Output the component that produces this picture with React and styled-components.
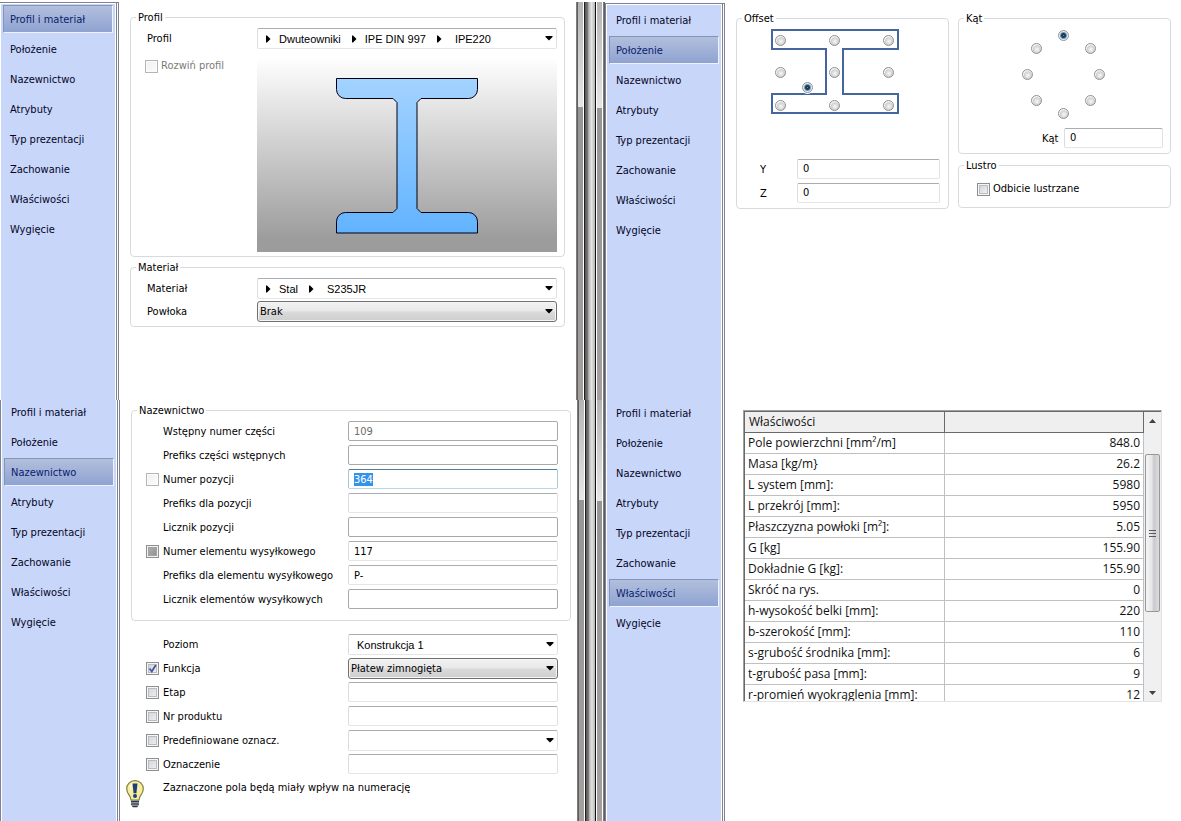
import React, { useEffect, useRef } from 'react';
import styled, { createGlobalStyle, css } from 'styled-components';

const GlobalStyle = createGlobalStyle`
    * {
        box-sizing: border-box;
    }

    body {
        margin: 0;
        background-color: #ffffff;
        color: #000000;
        font-family: "DejaVu Sans Condensed", "Noto Sans", sans-serif;
        font-size: 11px;
        line-height: 16px;
    }

    button, input, select {
        font: inherit;
        color: inherit;
        margin: 0;
    }
`;

const Page = styled.main`
    display: grid;
    grid-template-rows: minmax(400px, auto) 1fr;
    min-height: 100vh;
    overflow: hidden;
`;

const Strip = styled.div`
    display: flex;
    min-width: 0;
`;

const Panel = styled.section`
    display: flex;
    flex: 1 1 0;
    min-width: 0;
`;

/* sidebar */

const Sidebar = styled.nav`
    flex: none;
    margin-top: ${props => props.$top}px;
    padding: 0 1px;
    border-right: 3px double #7d8190;
    border-left: ${props => (props.$openLeft ? 'none' : '1px solid #7d8190')};
    border-top: ${props => (props.$top ? '1px solid #7d8190' : 'none')};
    padding-top: ${props => (props.$top ? '1px' : '0')};
`;

const MenuList = styled.ul`
    display: flow-root;
    width: 114px;
    height: 100%;
    margin: 0;
    padding: ${props => (props.$cut ? '0' : '1px')} 2px 0;
    list-style: none;
    background-color: #c8d6fa;
`;

const MenuItem = styled.li`
    height: 30px;

    &:first-child {
        margin-top: ${props => props.$shift}px;
    }
`;

const MenuButton = styled.button`
    display: block;
    width: 100%;
    height: 28px;
    padding: 2px 6px 0;
    border: 1px solid transparent;
    background: transparent;
    color: #05051e;
    text-align: left;
    white-space: nowrap;
    cursor: pointer;

    ${props => props.$active && css`
        color: #0a1c6e;
        background: linear-gradient(#b2bfdc, #8fa3d2);
        border-color: #8593b8 #eef2fd #eef2fd #8593b8;
    `}
`;

/* splitter between the panels */

const Divider = styled.div`
    display: flex;
    flex: none;
    width: 29px;
    margin-top: ${props => (props.$cut ? 0 : 2)}px;
    padding-left: ${props => (props.$cut ? 1 : 0)}px;
`;

const Edge = styled.span`
    width: 2px;
    background: linear-gradient(90deg, #8a8a8a, #505050);
`;

const Rail = styled.span`
    width: 5px;
    margin-right: 1px;
    background: linear-gradient(#b4b4b4, #e6e6e6 ${props => props.$turn}px, #969696 ${props => props.$turn}px, #a3a09e);
`;

const Tube = styled.span`
    flex: 1;
    margin-right: 1px;
    border-left: 1px solid #1e1e1e;
    border-right: 1px solid #101010;
    background: linear-gradient(90deg, #555555, #7d7d7d 30%, #b0b0b0 36%, #e4e4e4 65%, #b4b4b4);
`;

/* content */

const Content = styled.div`
    flex: 1;
    min-width: 0;
    padding: ${props => props.$pad};
`;

const Group = styled.fieldset`
    min-width: 0;
    margin: 0;
    margin-top: ${props => props.$top || 0}px;
    margin-left: ${props => props.$indent || 0}px;
    padding: ${props => props.$pad};
    border: 1px solid #d8dbde;
    border-radius: 4px;
`;

const Legend = styled.legend`
    height: 14px;
    margin-left: ${props => props.$left}px;
    padding: 0 2px;
`;

const FormGrid = styled.div`
    display: grid;
    grid-template-columns: 112px minmax(0, 1fr);
    row-gap: ${props => props.$gap || 0}px;
`;

const Caption = styled.label`
    height: 20px;
    padding-left: 2px;
    line-height: 22px;
    white-space: nowrap;
`;

const fieldBorder = css`
    border: 1px solid;
    border-color: #abadb3 #dfe1e5 #e3e5e8 #dadce0;
    border-radius: 2px;
`;

const TextInput = styled.input`
    display: block;
    width: 100%;
    min-width: 0;
    height: 20px;
    padding: 0 5px;
    background-color: #ffffff;
    ${fieldBorder}

    ${props => props.$locked && css`
        border-color: #a9a9a9;
    `}

    &:disabled {
        color: #6d6d6d;
    }

    &:focus {
        outline: none;
        border-color: #4f7d93 #a9cbd6 #b7d9e4 #a5c8d4;
    }

    &::selection {
        color: #ffffff;
        background-color: #3492ea;
    }
`;

const PathButton = styled.button`
    display: flex;
    align-items: center;
    width: 100%;
    height: 21px;
    padding: 0 3px 0 8px;
    background-color: #ffffff;
    font-family: "Liberation Sans", Arial, sans-serif;
    white-space: nowrap;
    ${fieldBorder}
`;

const PathStep = styled.span`
    margin: 0 11px 0 ${props => (props.$last ? 13 : 8)}px;
`;

const PathEnd = styled.span`
    display: flex;
    margin-left: auto;
`;

const SelectBox = styled.span`
    display: grid;
    align-items: center;

    & > select, & > svg {
        grid-area: 1 / 1;
    }

    & > svg {
        justify-self: end;
        margin-right: 4px;
        pointer-events: none;
    }
`;

const Select = styled.select`
    appearance: none;
    width: 100%;
    height: 21px;
    padding: 0 20px 0 8px;
    background: #ffffff;
    font-family: "Liberation Sans", Arial, sans-serif;
    ${fieldBorder}

    ${props => props.$raised && css`
        padding-top: 1px;
        padding-left: 2px;
        border-color: #707070;
        border-radius: 3px;
        background: linear-gradient(#f2f2f2, #e8e8e8 48%, #dadada 52%, #cecece);
        box-shadow: inset 0 0 0 1px #f6f6f6;
        font-family: inherit;
    `}
`;

const CheckBox = styled.span`
    display: inline-grid;
    flex: none;
    width: 13px;
    height: 13px;

    & > input, & > svg {
        grid-area: 1 / 1;
    }

    & > svg {
        display: none;
        pointer-events: none;
    }

    & > input:checked + svg {
        display: block;
    }
`;

const CheckInput = styled.input`
    appearance: none;
    width: 13px;
    height: 13px;
    border: 1px solid #8e8f8f;
    background: linear-gradient(135deg, #cbcfd5, #f6f6f6);
    box-shadow: inset 0 0 0 1px #f6f6f6, inset 0 0 0 2px #b9bcc1;

    ${props => props.$faint && css`
        border-color: #b5b5b5;
        background: linear-gradient(135deg, #f0f0f0, #fbfbfb);
        box-shadow: inset 0 0 0 1px #fbfbfb;
    `}

    &:indeterminate {
        background: linear-gradient(135deg, #b4b4b4, #8c8c8c);
        box-shadow: inset 0 0 0 1px #f2f2f2, inset 0 0 0 2px #a2a2a2;
    }
`;

const CheckLabel = styled.label`
    display: flex;
    align-items: center;
    gap: 3px;
    height: 14px;
    white-space: nowrap;
    color: ${props => (props.$muted ? '#7a7a7a' : 'inherit')};
`;

const PreviewSide = styled.div`
    padding-top: 10px;
`;

const Preview = styled.div`
    display: flex;
    justify-content: center;
    align-items: center;
    height: 203px;
    padding-top: 10px;
    background: linear-gradient(#ffffff 4%, #9c9c9c 94%);
`;

const NamingRow = styled.div`
    display: grid;
    grid-template-columns: 15px 187px minmax(0, 1fr);
    align-items: start;
    height: 24px;

    ${CheckBox} {
        margin-top: 4px;
    }
`;

const OtherRows = styled.div`
    margin-top: 13px;
    padding: 0 13px 0 20px;
`;

const Note = styled.div`
    display: flex;
    gap: 19px;
    margin-top: 2px;
    white-space: nowrap;
`;

/* position page */

const PositionGrid = styled.div`
    display: grid;
    grid-template-columns: minmax(0, 1fr) minmax(0, 1fr);
    column-gap: 9px;
    align-items: start;
`;

const Board = styled.div`
    position: relative;
    width: ${props => props.$w}px;
    height: ${props => props.$h}px;
    margin: ${props => props.$margin};
`;

const Radio = styled.input`
    appearance: none;
    position: absolute;
    left: ${props => props.$x}px;
    top: ${props => props.$y}px;
    width: 11px;
    height: 11px;
    border: 1px solid #909090;
    border-radius: 50%;
    background: radial-gradient(circle at 55% 60%, #f2f2f2 10%, #cfcfcf 50%, #f4f4f4 62%);

    &:checked {
        border-color: #8c969e;
        background: radial-gradient(circle at 50% 50%, #5b93b5 0, #123e60 1px, #123e60 2px, #e4ecf2 4px);
        box-shadow: 0 0 0 1px #ffffff;
    }
`;

const ValueRow = styled.div`
    display: grid;
    grid-template-columns: ${props => props.$label}px minmax(0, 1fr);
    height: 20px;
    padding-left: ${props => props.$left}px;
    line-height: 22px;

    & + & {
        margin-top: 4px;
    }
`;

/* properties table */

const TableFrame = styled.div`
    display: flex;
    height: 292px;
    overflow: hidden;
    border: 1px solid;
    border-color: #a0a0a0 #e3e3e3 #e3e3e3 #a0a0a0;
    box-shadow: inset 1px 1px 0 #696969;
    padding: 1px 0 0 1px;
`;

const Table = styled.table`
    flex: 1;
    align-self: flex-start;
    width: 100%;
    border-collapse: separate;
    border-spacing: 0;
    table-layout: fixed;
    font-family: "Open Sans", "Noto Sans", sans-serif;
    font-size: 12px;
    line-height: 20px;
    color: #111111;
`;

const HeadCell = styled.th`
    width: 50%;
    height: 21px;
    padding: 0 4px;
    background-color: #efefef;
    border-right: 1px solid #696969;
    border-bottom: 1px solid #696969;
    font-weight: 400;
    text-align: left;
`;

const Cell = styled.td`
    height: 21px;
    padding: 0 3px;
    border-right: 1px solid #c0c0c0;
    border-bottom: 1px solid #c0c0c0;
    text-align: ${props => (props.$number ? 'right' : 'left')};
    white-space: nowrap;
`;

const ScrollTrack = styled.div`
    display: flex;
    flex-direction: column;
    flex: none;
    width: 17px;
    background-color: #f0f0f0;
`;

const ScrollButton = styled.button`
    display: flex;
    justify-content: center;
    align-items: center;
    height: 17px;
    padding: 0;
    border: none;
    background: transparent;
`;

const ScrollThumb = styled.div`
    display: flex;
    justify-content: center;
    align-items: center;
    height: 158px;
    margin: 25px 1px auto;
    border: 1px solid #979797;
    border-radius: 2px;
    background: linear-gradient(90deg, #f5f5f5, #e6e6e8 45%, #c9cacd 60%, #dcdcde);
`;

const MENU = [
    'Profil i materiał',
    'Położenie',
    'Nazewnictwo',
    'Atrybuty',
    'Typ prezentacji',
    'Zachowanie',
    'Właściwości',
    'Wygięcie',
];

const NAMING = [
    { id: 'wst', label: 'Wstępny numer części', value: '109', locked: true, disabled: true },
    { id: 'prefw', label: 'Prefiks części wstępnych', locked: true },
    { id: 'poz', label: 'Numer pozycji', value: '364', check: 'faint', selected: true },
    { id: 'prefp', label: 'Prefiks dla pozycji' },
    { id: 'licz', label: 'Licznik pozycji', locked: true },
    { id: 'wys', label: 'Numer elementu wysyłkowego', value: '117', check: 'mixed' },
    { id: 'prefe', label: 'Prefiks dla elementu wysyłkowego', value: 'P-' },
    { id: 'licze', label: 'Licznik elementów wysyłkowych', locked: true },
];

const PROPERTIES = [
    ['Pole powierzchni [mm²/m]', '848.0'],
    ['Masa [kg/m}', '26.2'],
    ['L system [mm]:', '5980'],
    ['L przekrój [mm]:', '5950'],
    ['Płaszczyzna powłoki [m²]:', '5.05'],
    ['G [kg]', '155.90'],
    ['Dokładnie G [kg]:', '155.90'],
    ['Skróć na rys.', '0'],
    ['h-wysokość belki [mm]:', '220'],
    ['b-szerokość [mm]:', '110'],
    ['s-grubość środnika [mm]:', '6'],
    ['t-grubość pasa [mm]:', '9'],
    ['r-promień wyokrąglenia [mm]:', '12'],
];

const OFFSET_POINTS = [
    [4, 6], [58, 6], [112, 6],
    [4, 38], [58, 38], [112, 38],
    [31, 53],
    [4, 71], [58, 71], [112, 71],
];

const ANGLE_POINTS = [
    [36, 0], [63, 13], [72, 39], [63, 65],
    [36, 78], [9, 65], [0, 39], [9, 13],
];

const DownArrow = () => (
    <svg width="8" height="5" viewBox="0 0 8 5" aria-hidden="true">
        <path d="M.5 0h7v1L4 4.500.5 1z" fill="#000" />
    </svg>
);

const RightArrow = () => (
    <svg width="5" height="8" viewBox="0 0 5 8" aria-hidden="true">
        <path d="M0 .5h1L4.500 4 1 7.500H0z" fill="#000" />
    </svg>
);

const BeamPreview = () => (
    <svg width="142" height="156" viewBox="0 0 142 156" role="img" aria-label="IPE220">
        <defs>
            <linearGradient id="steel" x1="0" y1="0" x2="0" y2="1">
                <stop offset="0" stopColor="#a3d3ff" />
                <stop offset="1" stopColor="#62b3ff" />
            </linearGradient>
        </defs>
        <path
            d="M.5.5h141v11a9 9 0 0 1-9 9H85l-4 4v106l4 4h47.500a9 9 0 0 1 9 9v11.500H.5V143.500a9 9 0 0 1 9-9H57l4-4V24.500l-4-4H9.500a9 9 0 0 1-9-9z"
            fill="url(#steel)"
            stroke="#000014"
        />
    </svg>
);

const BeamOutline = () => (
    <svg width="128" height="85" viewBox="0 0 128 85" aria-hidden="true">
        <path
            d="M1 1H127V20H72V65H127V84H1V65H55V20H1Z"
            fill="none"
            stroke="#44669c"
            strokeWidth="2"
        />
    </svg>
);

const Bulb = () => (
    <svg width="18" height="28" viewBox="0 0 18 28" aria-hidden="true">
        <path
            d="M9 .7C4 .7.7 4.300.7 8.800c0 3.200 1.500 5 2.800 6.900.9 1.300 1.300 2.600 1.500 4.300h8c.2-1.700.6-3 1.500-4.300 1.300-1.900 2.800-3.700 2.800-6.900C17.300 4.300 14 .7 9 .7z"
            fill="#f5eda0"
            stroke="#85803c"
            strokeWidth="1.200"
        />
        <path d="M4 5.500C5 3.500 6.500 2.500 8.500 2.300 6 4 5 7 5.500 11 3.800 9.500 3.300 7.300 4 5.500z" fill="#fffde0" />
        <path d="M6.500 3.500h5l-1.100 9.800H7.600z" fill="#1c3f7c" />
        <circle cx="9" cy="16" r="2" fill="#1c3f7c" />
        <path d="M5 20h8v5l-2 2.500H7L5 25z" fill="#8d9198" />
        <path d="M5 21.500h8M5 24h8M6.500 26.500h5" stroke="#34373d" strokeWidth="1.200" />
    </svg>
);

const Check = ({ id, kind, ...rest }) => (
    <CheckBox>
        <CheckInput
            type="checkbox"
            id={id}
            $faint={kind === 'faint'}
            ref={el => { if (el && kind === 'mixed') el.indeterminate = true; }}
            {...rest}
        />
        <svg width="13" height="13" viewBox="0 0 13 13" aria-hidden="true">
            <path d="M3.500 6.500l2.300 3L9.800 3" fill="none" stroke="#3f5aa0" strokeWidth="1.800" />
        </svg>
    </CheckBox>
);

const Menu = ({ active, top = 0, shift = 0, openLeft }) => (
    <Sidebar $top={top} $openLeft={openLeft}>
        <MenuList $cut={!top}>
            {MENU.map(name => (
                <MenuItem key={name} $shift={shift}>
                    <MenuButton type="button" $active={name === active}>{name}</MenuButton>
                </MenuItem>
            ))}
        </MenuList>
    </Sidebar>
);

const Splitter = ({ cut }) => (
    <Divider $cut={cut}>
        <Edge />
        <Rail $turn={cut ? 100 : 105} />
        <Tube />
        <Rail $turn={cut ? 101 : 106} />
        <Edge />
    </Divider>
);

const PathField = ({ id, steps }) => (
    <PathButton type="button" id={id}>
        {steps.map((step, i) => (
            <React.Fragment key={step}>
                <RightArrow />
                <PathStep $last={i === steps.length - 1}>{step}</PathStep>
            </React.Fragment>
        ))}
        <PathEnd><DownArrow /></PathEnd>
    </PathButton>
);

const Dropdown = ({ id, value, raised, label }) => (
    <SelectBox>
        <Select id={id} $raised={raised} aria-label={label}>
            <option>{value}</option>
        </Select>
        <DownArrow />
    </SelectBox>
);

const ProfilePage = () => (
    <Content $pad="10px 11px 0 11px">
        <Group $pad="4px 7px 4px 14px">
            <Legend $left={-9}>Profil</Legend>
            <FormGrid>
                <Caption htmlFor="profil">Profil</Caption>
                <PathField id="profil" steps={['Dwuteowniki', 'IPE DIN 997', 'IPE220']} />
                <PreviewSide>
                    <CheckLabel $muted>
                        <Check kind="faint" disabled />
                        Rozwiń profil
                    </CheckLabel>
                </PreviewSide>
                <Preview><BeamPreview /></Preview>
            </FormGrid>
        </Group>
        <Group $pad="4px 7px 4px 14px" $top={3}>
            <Legend $left={-9}>Materiał</Legend>
            <FormGrid $gap={2}>
                <Caption htmlFor="material">Materiał</Caption>
                <PathField id="material" steps={['Stal', 'S235JR']} />
                <Caption htmlFor="powloka">Powłoka</Caption>
                <Dropdown id="powloka" value="Brak" raised />
            </FormGrid>
        </Group>
    </Content>
);

const PositionPage = () => (
    <Content $pad="11px 10px 0 11px">
        <PositionGrid>
            <Group $pad="4px 8px 5px 0">
                <Legend $left={5}>Offset</Legend>
                <Board $w={128} $h={85} $margin="0 0 45px 34px">
                    <BeamOutline />
                    {OFFSET_POINTS.map(([x, y], i) => (
                        <Radio
                            key={i}
                            type="radio"
                            name="offset"
                            aria-label={`Offset ${i + 1}`}
                            defaultChecked={i === 6}
                            $x={x}
                            $y={y}
                        />
                    ))}
                </Board>
                <ValueRow $label={37} $left={23}>
                    <label htmlFor="offy">Y</label>
                    <TextInput id="offy" defaultValue="0" />
                </ValueRow>
                <ValueRow $label={37} $left={23}>
                    <label htmlFor="offz">Z</label>
                    <TextInput id="offz" defaultValue="0" />
                </ValueRow>
            </Group>
            <div>
                <Group $pad="5px 7px 5px 0">
                    <Legend $left={5}>Kąt</Legend>
                    <Board $w={83} $h={89} $margin="0 0 9px 63px">
                        {ANGLE_POINTS.map(([x, y], i) => (
                            <Radio
                                key={i}
                                type="radio"
                                name="angle"
                                aria-label={`${i * 45}°`}
                                defaultChecked={i === 0}
                                $x={x}
                                $y={y}
                            />
                        ))}
                    </Board>
                    <ValueRow $label={22} $left={83}>
                        <label htmlFor="kat">Kąt</label>
                        <TextInput id="kat" defaultValue="0" />
                    </ValueRow>
                </Group>
                <Group $pad="10px 8px 11px 18px" $top={4}>
                    <Legend $left={-13}>Lustro</Legend>
                    <CheckLabel>
                        <Check />
                        Odbicie lustrzane
                    </CheckLabel>
                </Group>
            </div>
        </PositionGrid>
    </Content>
);

const NamingPage = () => {
    const positionInput = useRef(null);

    useEffect(() => {
        positionInput.current.focus();
        positionInput.current.select();
    }, []);

    return (
        <Content $pad="3px 5px 0 6px">
            <Group $pad="4px 12px 7px 14px" $indent={5}>
                <Legend $left={-9}>Nazewnictwo</Legend>
                {NAMING.map(row => (
                    <NamingRow key={row.id}>
                        {row.check ? <Check kind={row.check} aria-label={row.label} /> : <span />}
                        <Caption htmlFor={row.id}>{row.label}</Caption>
                        <TextInput
                            id={row.id}
                            defaultValue={row.value}
                            disabled={row.disabled}
                            $locked={row.locked}
                            ref={row.selected ? positionInput : null}
                        />
                    </NamingRow>
                ))}
            </Group>
            <OtherRows>
                <NamingRow>
                    <span />
                    <Caption htmlFor="poziom">Poziom</Caption>
                    <Dropdown id="poziom" value="Konstrukcja 1" />
                </NamingRow>
                <NamingRow>
                    <Check id="funkcja" defaultChecked />
                    <Caption htmlFor="funkcja">Funkcja</Caption>
                    <Dropdown label="Funkcja" value="Płatew zimnogięta" raised />
                </NamingRow>
                <NamingRow>
                    <Check id="etap" />
                    <Caption htmlFor="etap">Etap</Caption>
                    <TextInput aria-label="Etap" />
                </NamingRow>
                <NamingRow>
                    <Check id="produkt" />
                    <Caption htmlFor="produkt">Nr produktu</Caption>
                    <TextInput aria-label="Nr produktu" />
                </NamingRow>
                <NamingRow>
                    <Check id="predef" />
                    <Caption htmlFor="predef">Predefiniowane oznacz.</Caption>
                    <Dropdown label="Predefiniowane oznacz." value="" />
                </NamingRow>
                <NamingRow>
                    <Check id="oznaczenie" />
                    <Caption htmlFor="oznaczenie">Oznaczenie</Caption>
                    <TextInput aria-label="Oznaczenie" />
                </NamingRow>
            </OtherRows>
            <Note>
                <Bulb />
                Zaznaczone pola będą miały wpływ na numerację
            </Note>
        </Content>
    );
};

const PropertiesPage = () => (
    <Content $pad="10px 19px 0 18px">
        <TableFrame>
            <Table>
                <thead>
                    <tr>
                        <HeadCell scope="col">Właściwości</HeadCell>
                        <HeadCell scope="col" />
                    </tr>
                </thead>
                <tbody>
                    {PROPERTIES.map(([name, value]) => (
                        <tr key={name}>
                            <Cell>{name}</Cell>
                            <Cell $number>{value}</Cell>
                        </tr>
                    ))}
                </tbody>
            </Table>
            <ScrollTrack>
                <ScrollButton type="button" aria-label="W górę">
                    <svg width="7" height="4" viewBox="0 0 7 4"><path d="M0 4h7L3.500 0z" fill="#404040" /></svg>
                </ScrollButton>
                <ScrollThumb>
                    <svg width="8" height="9" viewBox="0 0 8 9">
                        <path d="M0 1.500h7M0 4.500h7M0 7.500h7" stroke="#5a5a5a" />
                    </svg>
                </ScrollThumb>
                <ScrollButton type="button" aria-label="W dół">
                    <svg width="7" height="4" viewBox="0 0 7 4"><path d="M0 0h7L3.500 4z" fill="#404040" /></svg>
                </ScrollButton>
            </ScrollTrack>
        </TableFrame>
    </Content>
);

const App = () => (
    <>
        <GlobalStyle />
        <Page>
            <Strip>
                <Panel>
                    <Menu active="Profil i materiał" top={2} openLeft />
                    <ProfilePage />
                </Panel>
                <Splitter />
                <Panel>
                    <Menu active="Położenie" top={3} />
                    <PositionPage />
                </Panel>
            </Strip>
            <Strip>
                <Panel>
                    <Menu active="Nazewnictwo" shift={-2} />
                    <NamingPage />
                </Panel>
                <Splitter cut />
                <Panel>
                    <Menu active="Właściwości" shift={-1} />
                    <PropertiesPage />
                </Panel>
            </Strip>
        </Page>
    </>
);

export default App;
